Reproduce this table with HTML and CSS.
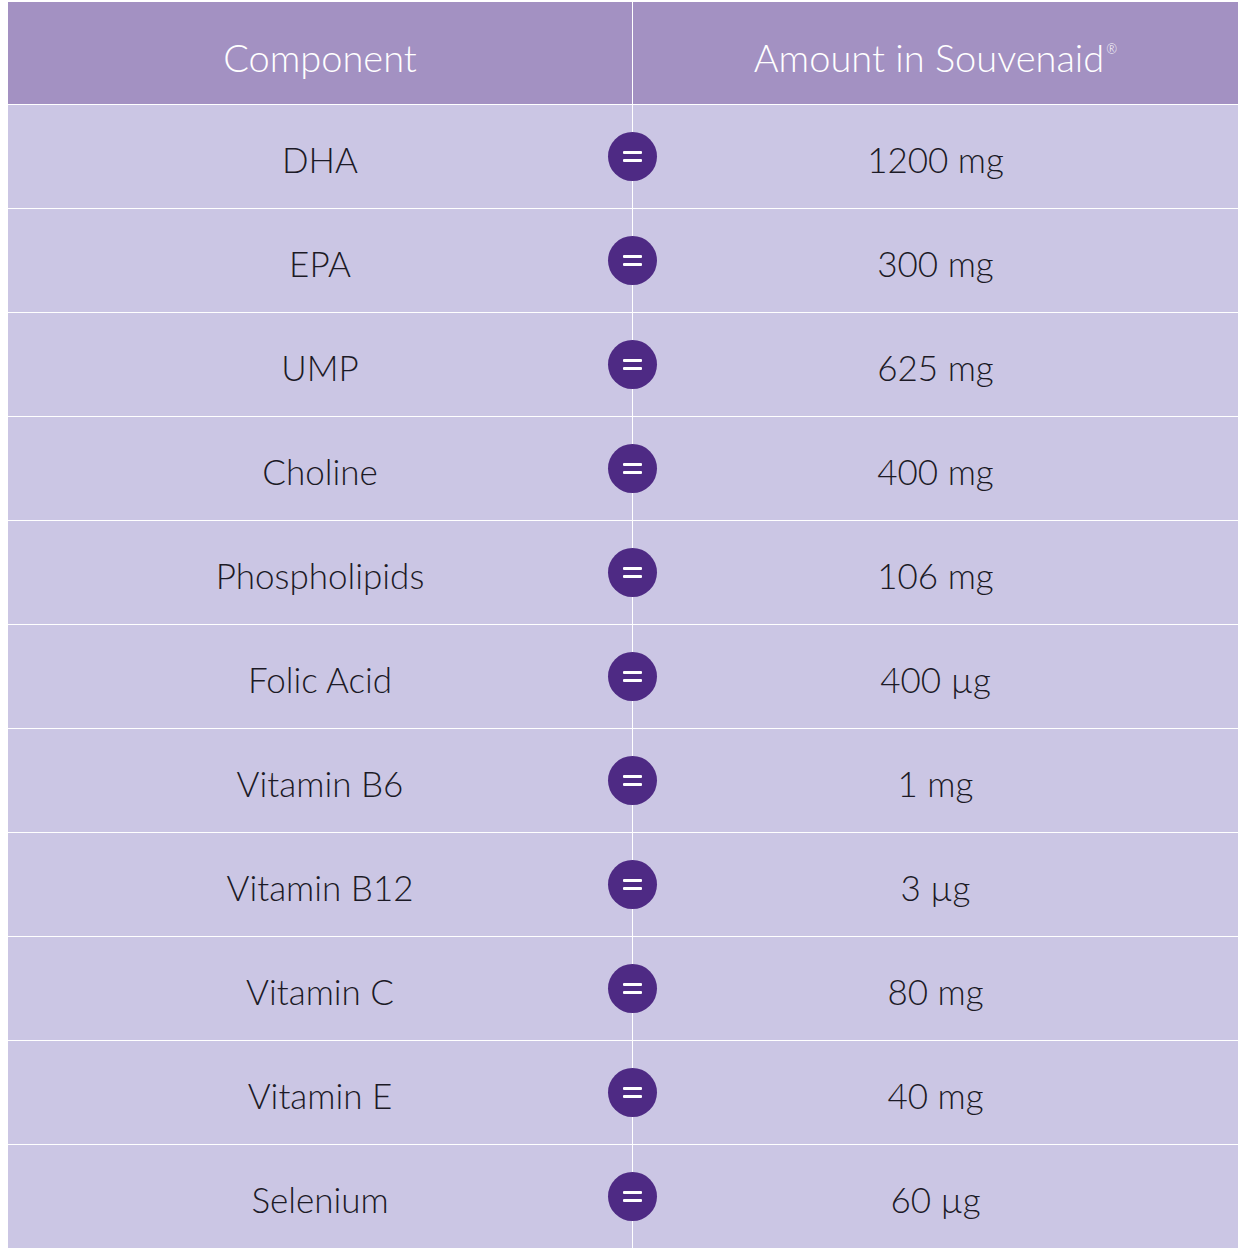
FILE: index.html
```html
<!DOCTYPE html>
<html>
<head>
<meta charset="utf-8">
<link rel="stylesheet" href="styles.css">
</head>
<body>
<div class="table">
  <div class="cell head">Component</div>
  <div class="cell head">Amount in Souvenaid<sup>®</sup></div>

  <div class="cell">DHA</div>
  <div class="cell val"><span class="eq"></span>1200 mg</div>

  <div class="cell">EPA</div>
  <div class="cell val"><span class="eq"></span>300 mg</div>

  <div class="cell">UMP</div>
  <div class="cell val"><span class="eq"></span>625 mg</div>

  <div class="cell">Choline</div>
  <div class="cell val"><span class="eq"></span>400 mg</div>

  <div class="cell">Phospholipids</div>
  <div class="cell val"><span class="eq"></span>106 mg</div>

  <div class="cell">Folic Acid</div>
  <div class="cell val"><span class="eq"></span>400 µg</div>

  <div class="cell">Vitamin B6</div>
  <div class="cell val"><span class="eq"></span>1 mg</div>

  <div class="cell">Vitamin B12</div>
  <div class="cell val"><span class="eq"></span>3 µg</div>

  <div class="cell">Vitamin C</div>
  <div class="cell val"><span class="eq"></span>80 mg</div>

  <div class="cell">Vitamin E</div>
  <div class="cell val"><span class="eq"></span>40 mg</div>

  <div class="cell">Selenium</div>
  <div class="cell val"><span class="eq"></span>60 µg</div>
</div>
</body>
</html>
```

FILE: styles.css
```css
html, body {
  margin: 0;
  padding: 0;
  background: #ffffff;
}

body {
  padding: 2px 0 0 8px;
}

.table {
  display: grid;
  grid-template-columns: 624px 605px;
  grid-template-rows: 102px repeat(11, 103px);
  column-gap: 1px;
  row-gap: 1px;
  width: 1230px;
  background: #ffffff;
}

.cell {
  position: relative;
  display: flex;
  align-items: center;
  justify-content: center;
  background: #cbc6e4;
  color: #1c1a26;
  font-family: Lato, "Liberation Sans", sans-serif;
  font-size: 35px;
  font-weight: 300;
  padding-top: 4px;
  box-sizing: border-box;
}

.cell.head {
  background: #a391c2;
  color: #ffffff;
  padding-top: 8px;
  font-size: 38px;
}

.cell.head sup {
  font-size: 13px;
  vertical-align: top;
  margin-top: -16px;
  margin-left: 2px;
  line-height: 1;
}

.eq {
  position: absolute;
  left: -25px;
  top: 50%;
  width: 49px;
  height: 49px;
  margin-top: -25px;
  border-radius: 50%;
  background: #4e2a84;
}

.eq::before,
.eq::after {
  content: "";
  position: absolute;
  left: 15px;
  width: 19px;
  height: 3px;
  background: #ffffff;
  border-radius: 1px;
}

.eq::before {
  top: 19px;
}

.eq::after {
  top: 27px;
}
```
